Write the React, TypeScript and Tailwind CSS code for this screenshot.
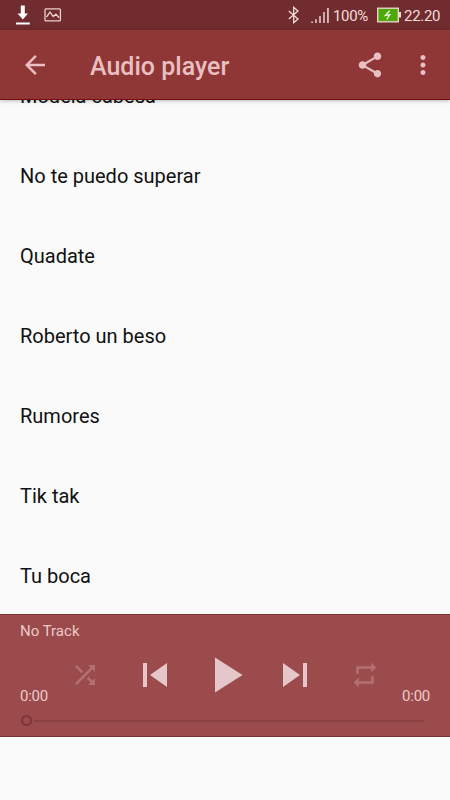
import type { ReactNode } from 'react';

const tracks = ['Modela cabesa', 'No te puedo superar', 'Quadate', 'Roberto un beso', 'Rumores', 'Tik tak', 'Tu boca'];

function Icon({ d, className }: { d: string; className: string }) {
  return (
    <svg viewBox="0 0 24 24" fill="currentColor" className={`block shrink-0 ${className}`}>
      <path d={d} />
    </svg>
  );
}

function StatusBar() {
  return (
    <div className="flex h-[30px] shrink-0 items-center bg-[#702c2e] text-[#f3dcdc]">
      <svg viewBox="0 0 16 22" className="ml-[15px] block h-[22px] w-4" fill="#ffffff">
        <path d="M5.8 1.5h4v8h3.2l-5.2 6-5.2-6h3.2zM1 18.4h13.8v2.1H1z" />
      </svg>
      <svg viewBox="0 0 18 14" className="ml-[13px] block h-[14px] w-[18px]" fill="none" stroke="#eccfcf" strokeWidth="1.3">
        <rect x="1" y=".9" width="15.4" height="12" rx="1" />
        <path d="M2.5 9 6 4.2l3.2 4.3 2.7-2.3 3.3 3.5" />
      </svg>
      <svg viewBox="0 0 12 18" className="ml-[226px] block h-[18px] w-3" fill="none" stroke="currentColor" strokeWidth="1.3">
        <path d="m.8 5 9.2 8-4.3 3.7V1.3L10 5 .8 13" />
      </svg>
      <svg viewBox="0 0 18 17" className="ml-[11px] block h-[17px] w-[18px]" fill="currentColor">
        <path d="M.3 14.5h1.5V16H.3zM4.3 12.3h1.4V16H4.3zM8.3 9h1.4v7H8.3zM12.3 5h1.4v11h-1.4zM16.2 1h1.5v15h-1.5z" />
      </svg>
      <span className="ml-1 w-[37px] whitespace-nowrap pt-px text-[15px] leading-[30px] tracking-[-0.35px]">100%</span>
      <svg viewBox="0 0 24 16" className="ml-[7px] block h-4 w-6">
        <rect x=".7" y="1.2" width="20.6" height="13.6" fill="#4da909" stroke="#f0dcd4" strokeWidth="1.3" />
        <path d="M22 5h2v5.5h-2z" fill="#f0dcd4" />
        <path d="m12.6 3.7-4.4 4.8 4.6-.8-3.2 4.8" fill="none" stroke="#e4f5d4" strokeWidth="1.3" />
      </svg>
      <span className="ml-[3px] whitespace-nowrap pt-px text-[15px] leading-[30px] tracking-[-0.3px]">22.20</span>
    </div>
  );
}

function AppBar() {
  return (
    <div className="relative z-10 flex h-[70px] shrink-0 items-center border-b border-[#730c10] bg-[#8f3737] text-[#e9bfc1] shadow-[0_1px_4px_rgba(0,0,0,0.25)]">
      <Icon className="ml-5 size-[30px]" d="M20 11H7.83l5.59-5.59L12 4l-8 8 8 8 1.41-1.41L7.83 13H20v-2z" />
      <h1 className="ml-10 grow pt-1 text-[25px] font-medium leading-[30px]">Audio player</h1>
      <Icon
        className="size-[30px]"
        d="M18 16.08c-.76 0-1.44.3-1.96.77L8.91 12.7c.05-.23.09-.46.09-.7s-.04-.47-.09-.7l7.05-4.11c.54.5 1.25.81 2.04.81 1.66 0 3-1.34 3-3s-1.34-3-3-3-3 1.34-3 3c0 .24.04.47.09.7L8.04 9.81C7.5 9.31 6.79 9 6 9c-1.66 0-3 1.34-3 3s1.34 3 3 3c.79 0 1.5-.31 2.04-.81l7.12 4.16c-.05.21-.08.43-.08.65 0 1.61 1.31 2.92 2.92 2.92 1.61 0 2.92-1.31 2.92-2.92s-1.31-2.92-2.92-2.92z"
      />
      <Icon
        className="ml-[22.5px] mr-[12.5px] size-[30px]"
        d="M12 8c1.1 0 2-.9 2-2s-.9-2-2-2-2 .9-2 2 .9 2 2 2zm0 2c-1.1 0-2 .9-2 2s.9 2 2 2 2-.9 2-2-.9-2-2-2zm0 6c-1.1 0-2 .9-2 2s.9 2 2 2 2-.9 2-2-.9-2-2-2z"
      />
    </div>
  );
}

function Slot({ className, children }: { className: string; children: ReactNode }) {
  return <div className={`flex shrink-0 items-center justify-center ${className}`}>{children}</div>;
}

function Player() {
  return (
    <div className="flex h-[123px] shrink-0 flex-col border-y border-[#7d3034] bg-[#9b4b4c] text-[15px] text-[#ecc9ca]">
      <div className="h-[30px] pl-5 leading-[32px]">No Track</div>
      <div className="flex h-[60px] items-center">
        <div className="w-[50px] self-end whitespace-nowrap pl-5 leading-[18px] tracking-[-0.25px]">0:00</div>
        <Slot className="w-[70px] text-[#b57172]">
          <Icon className="size-[30px]" d="M10.59 9.17L5.41 4 4 5.41l5.17 5.17 1.42-1.41zM14.5 4l2.04 2.04L4 18.59 5.41 20 17.96 7.46 20 9.5V4h-5.5zm.33 9.41l-1.41 1.41 3.13 3.13L14.5 20H20v-5.5l-2.04 2.04-3.13-3.13z" />
        </Slot>
        <Slot className="w-[70px] text-[#e5c7c9]">
          <Icon className="size-12" d="M6 6h2v12H6zm3.5 6l8.5 6V6z" />
        </Slot>
        <Slot className="w-[70px] text-[#e5c7c9]">
          <Icon className="size-[60px]" d="M8 5v14l11-7z" />
        </Slot>
        <Slot className="w-[70px] text-[#e5c7c9]">
          <Icon className="size-12" d="M6 18l8.5-6L6 6v12zM16 6v12h2V6h-2z" />
        </Slot>
        <Slot className="w-[70px] text-[#b57172]">
          <Icon className="size-[30px]" d="M7 7h10v3l4-4-4-4v3H5v6h2V7zm10 10H7v-3l-4 4 4 4v-3h12v-6h-2v4z" />
        </Slot>
        <div className="flex w-[50px] justify-end self-end whitespace-nowrap pr-5 leading-[18px] tracking-[-0.25px]">0:00</div>
      </div>
      <div className="flex h-[31px] items-center gap-[2px] pl-[21px] pr-[26px]">
        <div className="size-[11px] shrink-0 rounded-full border-[2.5px] border-[#7e3537]" />
        <div className="h-[2px] grow bg-[#894042]" />
      </div>
    </div>
  );
}

export default function App() {
  return (
    <div className="flex h-[800px] w-[450px] flex-col overflow-hidden bg-[#fafafa] font-['Roboto',sans-serif]">
      <StatusBar />
      <AppBar />
      <div className="flex h-[514px] shrink-0 flex-col justify-end overflow-hidden">
        <div className="-mb-[2px] shrink-0">
          {tracks.map((track) => (
            <div key={track} className="flex h-20 items-center pl-5 text-[20px] leading-6 text-[#111111]">
              {track}
            </div>
          ))}
        </div>
      </div>
      <Player />
    </div>
  );
}
